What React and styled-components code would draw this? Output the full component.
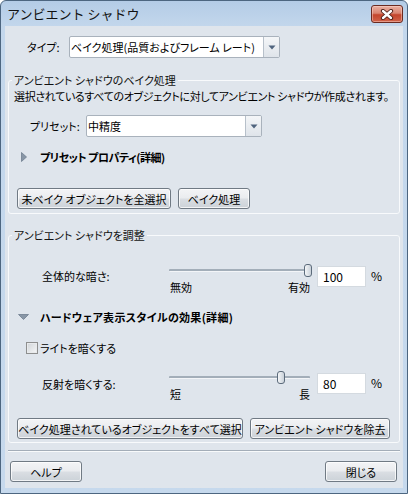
import React from "react";
import styled, { createGlobalStyle } from "styled-components";

const FONT = `"Noto Sans CJK JP", "Noto Sans", sans-serif`;

const Global = createGlobalStyle`
  html, body { margin: 0; padding: 0; background: #ffffff; }
  body { font-family: ${FONT}; font-size: 11px; color: #000; }
  * { box-sizing: border-box; }
`;

const Window = styled.div`
  width: 408px;
  height: 494px;
  border: 1px solid #4d6680;
  border-radius: 6px 6px 0 0;
  background: linear-gradient(#b4cce6, #c3d7ec 26px, #c6d9ed);
  padding: 0 4px 5px 4px;
  display: flex;
  flex-direction: column;
  font-family: ${FONT};
  font-size: 11px;
  font-feature-settings: "palt";
`;

const TitleBar = styled.div`
  height: 25px;
  display: flex;
  align-items: flex-start;
  justify-content: space-between;
  padding-left: 2px;
`;

const Title = styled.div`
  font-size: 13px;
  line-height: 15px;
  margin-top: 5px;
  color: #111;
  font-feature-settings: normal;
  white-space: nowrap;
`;

const CloseButton = styled.div`
  width: 32px;
  height: 18px;
  margin-top: 4px;
  border: 1px solid #6b2a20;
  border-radius: 3px;
  background: linear-gradient(#eab0a2 0%, #d98470 45%, #c4452c 55%, #d0634a 100%);
  box-shadow: inset 0 0 0 1px rgba(255, 220, 210, 0.45);
  display: flex;
  align-items: center;
  justify-content: center;
`;

const Client = styled.div`
  flex: 1;
  background: #dfe5ec;
  padding: 0 3px;
  display: flex;
  flex-direction: column;
`;

const Row = styled.div`
  display: flex;
  align-items: ${(p) => p.$align || "center"};
  margin-top: ${(p) => p.$mt || 0}px;
  padding-left: ${(p) => p.$pl || 0}px;
  gap: ${(p) => p.$gap || 0}px;
`;

const Label = styled.div`
  width: ${(p) => p.$w}px;
  flex: none;
  line-height: 14px;
  margin-top: ${(p) => p.$mt || 0}px;
  white-space: nowrap;
`;

const Combo = styled.div`
  width: ${(p) => p.$w}px;
  height: 22px;
  display: flex;
  background: #ffffff;
  border: 1px solid #a9b2bc;
  border-radius: 2px;
`;

const ComboText = styled.div`
  flex: 1;
  padding-left: 1px;
  line-height: 20px;
  white-space: nowrap;
  overflow: hidden;
`;

const ComboArrow = styled.div`
  width: 16px;
  flex: none;
  border-left: 1px solid #b7c0ca;
  border-radius: 0 1px 1px 0;
  background: linear-gradient(#f4f6f8, #dfe4ea);
  display: flex;
  align-items: center;
  justify-content: center;
`;

const Group = styled.fieldset`
  margin: ${(p) => p.$mt || 0}px 0 0 0;
  min-width: 0;
  border: 1px solid #f8fafc;
  border-radius: 3px;
  padding: 0 5px ${(p) => p.$pb || 0}px 5px;
  display: flex;
  flex-direction: column;
`;

const Legend = styled.legend`
  margin-left: -2px;
  padding: 0 2px;
  line-height: 14px;
  color: #111;
`;

const Desc = styled.div`
  line-height: 14px;
  margin-top: ${(p) => p.$mt || 0}px;
  letter-spacing: -0.35px;
  white-space: nowrap;
`;

const Expander = styled.div`
  display: flex;
  align-items: center;
  height: 14px;
  margin-top: ${(p) => p.$mt || 0}px;
  padding-left: 4px;
  font-weight: bold;
  letter-spacing: ${(p) => p.$ls || 0}px;
  white-space: nowrap;
`;

const ExpIcon = styled.div`
  width: 11px;
  margin-right: 11px;
  display: flex;
  align-items: center;
  justify-content: center;
`;

const Button = styled.button`
  width: ${(p) => p.$w}px;
  height: 21px;
  padding: 0;
  font-family: ${FONT};
  font-size: 11px;
  font-feature-settings: "palt";
  color: #000;
  border: 1px solid #707a84;
  border-radius: 3px;
  background: linear-gradient(#f3f4f6 0%, #eaecef 48%, #dadee3 52%, #ccd2d8 100%);
  box-shadow: inset 0 0 0 1px rgba(255, 255, 255, 0.75);
  white-space: nowrap;
`;

const SliderBox = styled.div`
  width: 143px;
  flex: none;
  display: flex;
  flex-direction: column;
`;

const TrackArea = styled.div`
  position: relative;
  height: 13px;
`;

const Track = styled.div`
  position: absolute;
  left: 0;
  right: 2px;
  top: 5px;
  height: 3px;
  background: #a3aeb9;
  border-bottom: 1px solid #f3f5f8;
  border-radius: 1px;
`;

const Thumb = styled.div`
  position: absolute;
  top: 0;
  width: 8px;
  height: 13px;
  border: 1px solid #5c6b7b;
  border-radius: 3px;
  background: linear-gradient(90deg, #f4f6f8, #c9d1d9);
`;

const Ticks = styled.div`
  display: flex;
  justify-content: space-between;
  margin-top: 4px;
  line-height: 12px;
  padding-left: 1px;
  padding-right: 2px;
`;

const NumInput = styled.div`
  width: 49px;
  height: 21px;
  margin-left: 5px;
  margin-top: 2px;
  background: #ffffff;
  border: 1px solid #d4dae0;
  padding-left: 5px;
  line-height: 19px;
  font-size: 12px;
`;

const Percent = styled.div`
  margin-left: 5px;
  margin-top: 5px;
  line-height: 14px;
  font-size: 12px;
`;

const CheckBox = styled.div`
  width: 12px;
  height: 12px;
  border: 1px solid #8e8f8f;
  background: linear-gradient(135deg, #d0d4d8, #f6f7f8);
  box-shadow: inset 0 0 0 1px #e8eaec;
`;

const Separator = styled.div`
  height: 2px;
  margin-top: 7px;
  border-top: 1px solid #a3adb8;
  border-bottom: 1px solid #f8fafb;
`;

const Footer = styled.div`
  display: flex;
  justify-content: space-between;
  margin-top: 9px;
  padding: 0 3px 0 2px;
`;

const DownArrow = () => (
  <svg width="8" height="5" viewBox="0 0 8 5">
    <path d="M0.5 0.5 L7.5 0.5 L4 4.5 Z" fill="#50647e" />
  </svg>
);

const Slider = ({ value, min, max }) => (
  <SliderBox>
    <TrackArea>
      <Track />
      <Thumb style={{ left: `${Math.round((135 * value) / 100)}px` }} />
    </TrackArea>
    <Ticks>
      <span>{min}</span>
      <span>{max}</span>
    </Ticks>
  </SliderBox>
);

export default function App() {
  return (
    <>
      <Global />
      <Window>
        <TitleBar>
          <Title>アンビエント シャドウ</Title>
          <CloseButton>
            <svg width="14" height="11" viewBox="0 0 14 11">
              <path d="M3 2 L11 9 M11 2 L3 9" stroke="#4a1c14" strokeWidth="4.2" strokeLinecap="round" />
              <path d="M3 2 L11 9 M11 2 L3 9" stroke="#ffffff" strokeWidth="2.4" strokeLinecap="round" />
            </svg>
          </CloseButton>
        </TitleBar>
        <Client>
          <Row $mt={10} $pl={19}>
            <Label $w={42}>タイプ:</Label>
            <Combo $w={211}>
              <ComboText>ベイク処理(品質およびフレーム レート)</ComboText>
              <ComboArrow>
                <DownArrow />
              </ComboArrow>
            </Combo>
          </Row>

          <Group $mt={15} $pb={4}>
            <Legend>アンビエント シャドウのベイク処理</Legend>
            <Desc $mt={2}>選択されているすべてのオブジェクトに対してアンビエント シャドウが作成されます。</Desc>
            <Row $mt={12} $pl={16}>
              <Label $w={56}>プリセット:</Label>
              <Combo $w={176}>
                <ComboText>中精度</ComboText>
                <ComboArrow>
                  <DownArrow />
                </ComboArrow>
              </Combo>
            </Row>
            <Expander $mt={13} $ls={-0.5}>
              <ExpIcon>
                <svg width="6" height="10" viewBox="0 0 6 10">
                  <path d="M0.5 0.5 L5.5 5 L0.5 9.5 Z" fill="#8896a6" stroke="#6f7e8f" strokeWidth="0.8" />
                </svg>
              </ExpIcon>
              プリセット プロパティ(詳細)
            </Expander>
            <Row $mt={24} $pl={3} $gap={7}>
              <Button $w={154}>未ベイク オブジェクトを全選択</Button>
              <Button $w={72}>ベイク処理</Button>
            </Row>
          </Group>

          <Group $mt={14} $pb={3}>
            <Legend>アンビエント シャドウを調整</Legend>
            <Row $mt={22} $pl={28} $align="flex-start">
              <Label $w={127} $mt={5}>全体的な暗さ:</Label>
              <Slider value={100} min="無効" max="有効" />
              <NumInput>100</NumInput>
              <Percent>%</Percent>
            </Row>
            <Expander $mt={17} $ls={0.3}>
              <ExpIcon>
                <svg width="11" height="6" viewBox="0 0 11 6">
                  <path d="M0.5 0.5 L10.5 0.5 L5.5 5.5 Z" fill="#8896a6" stroke="#6f7e8f" strokeWidth="0.8" />
                </svg>
              </ExpIcon>
              ハードウェア表示スタイルの効果(詳細)
            </Expander>
            <Row $mt={17} $pl={12} $gap={2}>
              <CheckBox />
              <Label $w={120}>ライトを暗くする</Label>
            </Row>
            <Row $mt={16} $pl={28} $align="flex-start">
              <Label $w={127} $mt={6}>反射を暗くする:</Label>
              <Slider value={80} min="短" max="長" />
              <NumInput>80</NumInput>
              <Percent>%</Percent>
            </Row>
            <Row $mt={18} $pl={3} $gap={7}>
              <Button $w={226}>ベイク処理されているオブジェクトをすべて選択</Button>
              <Button $w={140}>アンビエント シャドウを除去</Button>
            </Row>
          </Group>

          <Separator />
          <Footer>
            <Button $w={72}>ヘルプ</Button>
            <Button $w={72}>閉じる</Button>
          </Footer>
        </Client>
      </Window>
    </>
  );
}
